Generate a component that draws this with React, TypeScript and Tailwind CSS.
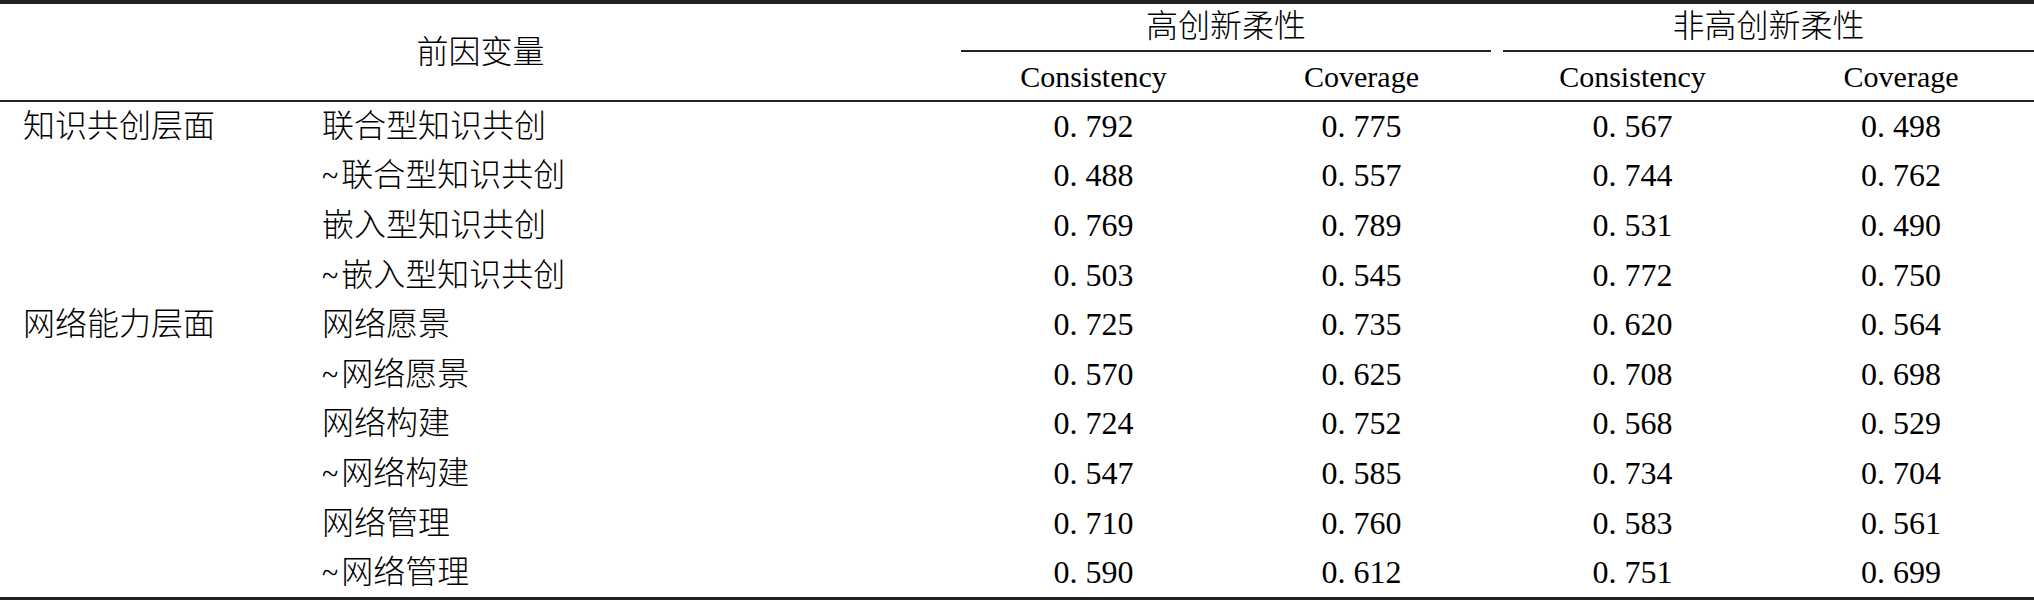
import React from 'react';

type Row = { group?: string; name: string; vals: string[] };

const ROWS: Row[] = [
  { group: '知识共创层面', name: '联合型知识共创', vals: ['0. 792', '0. 775', '0. 567', '0. 498'] },
  { name: '~联合型知识共创', vals: ['0. 488', '0. 557', '0. 744', '0. 762'] },
  { name: '嵌入型知识共创', vals: ['0. 769', '0. 789', '0. 531', '0. 490'] },
  { name: '~嵌入型知识共创', vals: ['0. 503', '0. 545', '0. 772', '0. 750'] },
  { group: '网络能力层面', name: '网络愿景', vals: ['0. 725', '0. 735', '0. 620', '0. 564'] },
  { name: '~网络愿景', vals: ['0. 570', '0. 625', '0. 708', '0. 698'] },
  { name: '网络构建', vals: ['0. 724', '0. 752', '0. 568', '0. 529'] },
  { name: '~网络构建', vals: ['0. 547', '0. 585', '0. 734', '0. 704'] },
  { name: '网络管理', vals: ['0. 710', '0. 760', '0. 583', '0. 561'] },
  { name: '~网络管理', vals: ['0. 590', '0. 612', '0. 751', '0. 699'] },
];

// latin in Times metrics, chinese falls through to Noto CJK
const serif = "font-['Liberation_Serif','Times_New_Roman','Noto_Sans_CJK_SC',serif]";

const Name = ({ text }: { text: string }) =>
  text.startsWith('~') ? (
    <>
      <span className="font-['Liberation_Serif',serif] text-[30px] font-normal mr-[3px]">~</span>
      {text.slice(1)}
    </>
  ) : (
    <>{text}</>
  );

const App: React.FC = () => {
  return (
    <div className={`w-[2034px] h-[600px] bg-white text-black overflow-hidden ${serif}`}>
      <div className="border-t-4 border-b-[3px] border-[#222]">
        <table className="w-full table-fixed border-collapse">
          <colgroup>
            <col className="w-[300px]" />
            <col className="w-[661px]" />
            <col className="w-[265px]" />
            <col className="w-[271px]" />
            <col className="w-[271px]" />
            <col className="w-[266px]" />
          </colgroup>
          <thead>
            <tr className="h-[48px]">
              <th colSpan={2} rowSpan={2} className="font-light text-[32px] text-center align-middle border-b-2 border-[#222]">
                前因变量
              </th>
              <th colSpan={2} className="p-0 align-bottom font-light">
                <div className="mr-[6px] border-b-2 border-[#222] h-[48px] flex items-center justify-center text-[32px] pb-[2px]">
                  高创新柔性
                </div>
              </th>
              <th colSpan={2} className="p-0 align-bottom font-light">
                <div className="ml-[6px] border-b-2 border-[#222] h-[48px] flex items-center justify-center text-[32px] pb-[2px]">
                  非高创新柔性
                </div>
              </th>
            </tr>
            <tr className="h-[49px] border-b-2 border-[#222]">
              <th className="font-normal text-[30px] text-center font-['Liberation_Serif',serif]">Consistency</th>
              <th className="font-normal text-[30px] text-center font-['Liberation_Serif',serif]">Coverage</th>
              <th className="font-normal text-[30px] text-center font-['Liberation_Serif',serif]">Consistency</th>
              <th className="font-normal text-[30px] text-center font-['Liberation_Serif',serif]">Coverage</th>
            </tr>
          </thead>
          <tbody>
            {ROWS.map((r, i) => (
              <tr key={i} className="h-[49.6px]">
                <td className="pl-[23px] text-[32px] font-light whitespace-nowrap">{r.group ?? ''}</td>
                <td className="pl-[22px] text-[32px] font-light whitespace-nowrap">
                  <Name text={r.name} />
                </td>
                {r.vals.map((v, j) => (
                  <td key={j} className="text-center text-[32px] whitespace-pre font-['Liberation_Serif',serif]">{v}</td>
                ))}
              </tr>
            ))}
          </tbody>
        </table>
      </div>
    </div>
  );
};

export default App;
